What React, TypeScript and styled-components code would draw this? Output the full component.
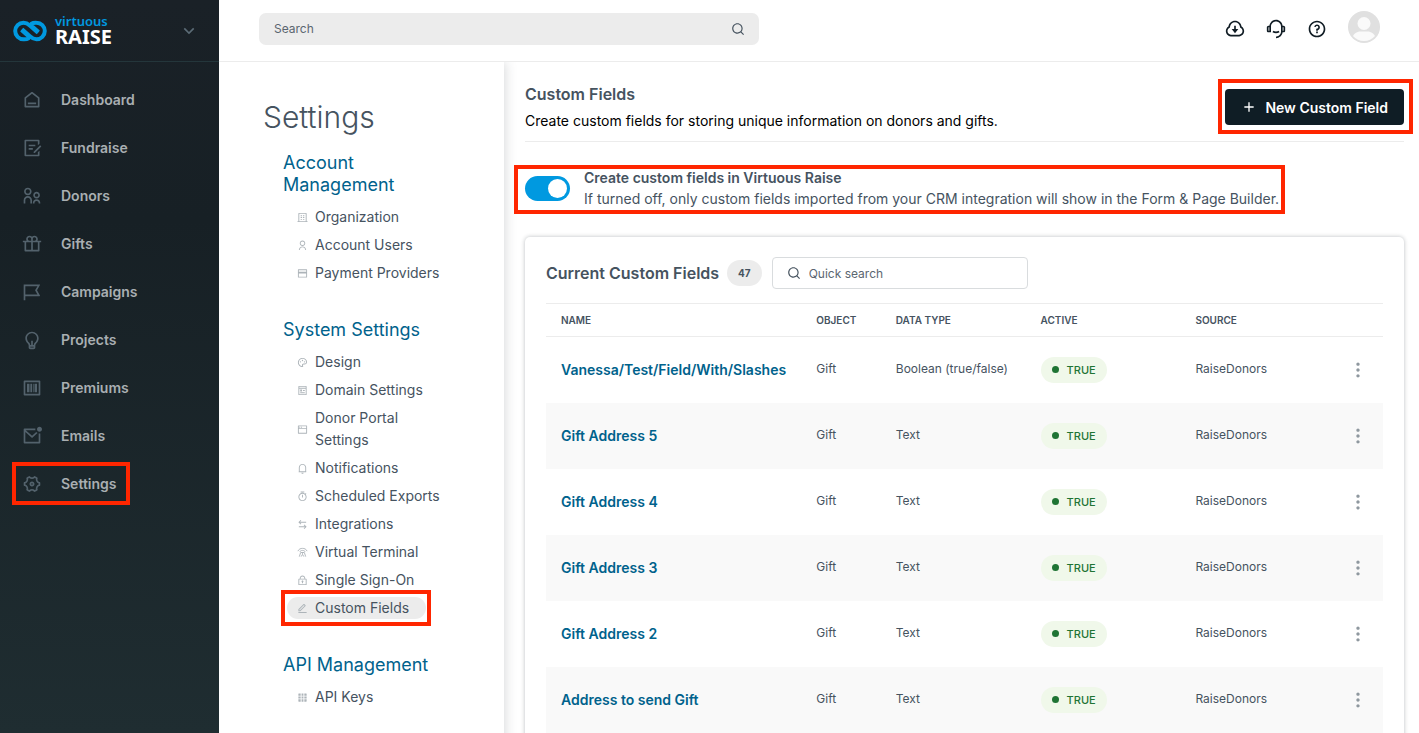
import React from "react";
import styled, { createGlobalStyle, css } from "styled-components";
import type { IconType } from "react-icons";
import {
  RiAddLine,
  RiArrowDownSLine,
  RiArrowLeftRightLine,
  RiBankCard2Line,
  RiBarcodeBoxLine,
  RiBuilding4Line,
  RiCustomerService2Line,
  RiDownloadCloudLine,
  RiDraftLine,
  RiEditLine,
  RiFlag2Line,
  RiGiftLine,
  RiGridFill,
  RiHome6Line,
  RiLightbulbLine,
  RiLock2Line,
  RiMailUnreadLine,
  RiMore2Fill,
  RiNotification4Line,
  RiPagesLine,
  RiPaletteLine,
  RiParentLine,
  RiQuestionLine,
  RiSearchLine,
  RiSettings4Line,
  RiTimerLine,
  RiUserLine,
  RiWindowLine,
} from "react-icons/ri";

const ink = "#46535f";
const link = "#00628c";
const line = "#ececec";
const alert = "#ff2600";

const GlobalStyle = createGlobalStyle`
  *, *::before, *::after { box-sizing: border-box; }
  body {
    margin: 0;
    font-family: Inter, "Liberation Sans", sans-serif;
    font-size: 14px;
    color: ${ink};
    background: #fff;
  }
  h1, h2, h3, p, ul { margin: 0; padding: 0; }
  ul { list-style: none; }
  a { color: inherit; text-decoration: none; }
  strong { font-weight: 600; }
  button, input { font: inherit; color: inherit; }
`;

const Shell = styled.div`
  display: grid;
  grid-template-columns: 219px 1fr;
  height: 100vh;
  overflow: hidden;
`;

/* Red call-out frame drawn over a control; --reach sets how far it extends. */
const callout = css`
  position: relative;
  &::after {
    content: "";
    position: absolute;
    inset: var(--reach);
    border: 4px solid ${alert};
    pointer-events: none;
  }
`;

const Sidebar = styled.aside`
  background: linear-gradient(#1a2127, #172025 30%, #1f2d31);
  color: #a9afb2;
`;

const Brand = styled.div`
  display: flex;
  align-items: center;
  height: 62px;
  padding: 0 20px 0 13px;
  border-bottom: 1px solid #24363b;
`;

const BrandName = styled.div`
  margin-left: 8px;
  flex: 1;
  font-family: "Noto Sans", sans-serif;
`;

const BrandCompany = styled.div`
  font-size: 13px;
  line-height: 13px;
  font-weight: 600;
  color: #0099e0;
`;

const BrandProduct = styled.div`
  font-size: 20px;
  line-height: 18px;
  font-weight: 700;
  color: #fff;
`;

const BrandToggle = styled.button`
  display: flex;
  padding: 0;
  border: 0;
  background: none;
  color: #5b6b76;
  font-size: 20px;
`;

const MainNav = styled.ul`
  padding-top: 14px;
`;

const MainLink = styled.a`
  display: inline-flex;
  align-items: center;
  gap: 19px;
  height: 48px;
  padding-left: 22px;
  font-weight: 600;
  line-height: 20px;
  svg { width: 20px; height: 20px; color: #53626c; }
  &[aria-current] {
    ${callout}
    --reach: 2px -13px 3px 12px;
  }
`;

const Body = styled.div`
  display: grid;
  grid-template-rows: 62px 1fr;
  min-width: 0;
  min-height: 0;
`;

const TopBar = styled.header`
  display: flex;
  align-items: center;
  justify-content: space-between;
  padding: 0 39px 4px 40px;
  border-bottom: 1px solid ${line};
`;

const SearchBox = styled.label`
  display: flex;
  align-items: center;
  width: 500px;
  height: 32px;
  padding: 0 14px 0 15px;
  border-radius: 7px;
  background: #ececec;
  font-size: 12px;
  svg { width: 14px; height: 14px; }
`;

const PlainInput = styled.input`
  flex: 1;
  min-width: 0;
  padding: 0;
  border: 0;
  outline: 0;
  background: none;
  &::placeholder { color: #5b6670; opacity: 1; }
`;

const Tools = styled.div`
  display: flex;
  align-items: center;
  gap: 21px;
  color: #101c24;
`;

const ToolButton = styled.button`
  display: flex;
  padding: 0;
  border: 0;
  background: none;
  font-size: 20px;
`;

const AccountButton = styled(ToolButton)`
  padding-bottom: 4px;
`;

const Columns = styled.div`
  display: grid;
  grid-template-columns: 285px 1fr;
  min-height: 0;
`;

const SettingsNav = styled.nav`
  padding: 35px 64px 0 44px;
  box-shadow: 0 0 12px rgba(40, 50, 60, 0.22);
  clip-path: inset(0 -24px 0 0);
`;

const NavTitle = styled.h1`
  font-size: 30px;
  line-height: 40px;
  font-weight: 300;
`;

const NavGroup = styled.section`
  padding-left: 20px;
  & + & { margin-top: 35px; }
  h1 + & { margin-top: 15px; }
`;

const NavHeading = styled.h2`
  margin-bottom: 10px;
  font-size: 18px;
  line-height: 22px;
  font-weight: 400;
  color: ${link};
`;

const NavList = styled.ul`
  display: flex;
  flex-direction: column;
  align-items: flex-start;
  gap: 6px;
  padding-left: 4px;
`;

const NavLink = styled.a<{ $wraps?: boolean }>`
  display: flex;
  align-items: center;
  gap: 7px;
  width: ${(p) => (p.$wraps ? "146px" : "auto")};
  padding: 0 17px 0 10px;
  border-radius: 11px;
  line-height: 22px;
  white-space: ${(p) => (p.$wraps ? "normal" : "nowrap")};
  svg { flex: none; width: 11px; height: 11px; color: #adb4b9; }
  &[aria-current] {
    background: #ececec;
    ${callout}
    --reach: -7px -5px -7px -6px;
  }
`;

const Content = styled.main`
  min-width: 0;
  padding: 19px 15px 0 21px;
`;

const PageHead = styled.div`
  display: flex;
  justify-content: space-between;
  align-items: flex-start;
  height: 61px;
  border-bottom: 1px solid ${line};
`;

const PageTitle = styled.h2`
  font-size: 16px;
  line-height: 26px;
  font-weight: 600;
`;

const Lead = styled.p`
  line-height: 28px;
  color: #000;
`;

const PrimaryButton = styled.button`
  display: flex;
  align-items: center;
  gap: 8px;
  height: 36px;
  margin-top: 8px;
  padding: 0 16px;
  border: 0;
  border-radius: 4px;
  background: #0f1d25;
  color: #fff;
  font-weight: 600;
  svg { width: 16px; height: 16px; }
  ${callout}
  --reach: -10px -9px -9px -7px;
`;

const SwitchRow = styled.label`
  display: flex;
  align-items: center;
  gap: 14px;
  width: fit-content;
  margin-top: 25px;
  line-height: 21px;
  ${callout}
  --reach: -2px -6px -5px -11px;
`;

const Switch = styled.input`
  appearance: none;
  display: flex;
  align-items: center;
  justify-content: flex-end;
  width: 45px;
  height: 25px;
  margin: 0;
  padding: 3px;
  border-radius: 13px;
  background: #0099e0;
  &::before {
    content: "";
    width: 19px;
    height: 19px;
    border-radius: 50%;
    background: #fff;
  }
  &:not(:checked) { justify-content: flex-start; background: #aab2b8; }
`;

const Card = styled.section`
  margin-top: 28px;
  min-height: 600px;
  padding: 20px 21px;
  border-radius: 5px;
  box-shadow: 0 0 4px rgba(30, 40, 50, 0.3);
`;

const CardHead = styled.div`
  display: flex;
  align-items: center;
  height: 32px;
  margin-bottom: 14px;
`;

const CardTitle = styled.h3`
  font-size: 16px;
  font-weight: 600;
`;

const Count = styled.span`
  margin: 0 10px 0 8px;
  padding: 0 11px;
  border-radius: 13px;
  background: #ececec;
  font-size: 10px;
  line-height: 26px;
  font-weight: 700;
`;

const QuickSearch = styled.label`
  display: flex;
  align-items: center;
  gap: 8px;
  width: 256px;
  height: 32px;
  padding: 0 14px;
  border: 1px solid #d9dcde;
  border-radius: 4px;
  font-size: 12px;
  svg { width: 14px; height: 14px; }
`;

const Table = styled.table`
  width: 100%;
  table-layout: fixed;
  border-collapse: collapse;
  font-size: 12px;
`;

const Th = styled.th<{ $w?: string }>`
  width: ${(p) => p.$w ?? "auto"};
  height: 33px;
  padding: 0 0 0 15px;
  border: solid ${line};
  border-width: 1px 0;
  text-align: left;
  font-size: 10px;
  font-weight: 600;
`;

const Row = styled.tr`
  &:nth-child(even) { background: #f9f9f9; }
`;

const Td = styled.td<{ $control?: boolean }>`
  height: 66px;
  padding: 0 0 ${(p) => (p.$control ? "0" : "2px")} 15px;
  white-space: nowrap;
`;

const FieldLink = styled.a`
  font-size: 14px;
  font-weight: 600;
  color: ${link};
`;

const Status = styled.span`
  display: flex;
  align-items: center;
  gap: 8px;
  width: fit-content;
  height: 26px;
  padding: 0 11px;
  border-radius: 13px;
  background: #f0f8ea;
  color: #1f7434;
  font-size: 11px;
  font-weight: 500;
  &::before {
    content: "";
    width: 7px;
    height: 7px;
    border-radius: 50%;
    background: currentColor;
  }
`;

const RowMenu = styled.button`
  display: flex;
  margin-left: auto;
  padding: 0 15px 0 0;
  border: 0;
  background: none;
  color: #8f989f;
  font-size: 20px;
`;

const TerminalIcon = () => (
  <svg viewBox="0 0 24 24" fill="none" stroke="currentColor" strokeWidth="2" aria-hidden>
    <path d="M2 9C4 4.500 8 3 12 3S20 4.500 22 9M6 11C7 8.500 9 7.500 12 7.500S17 8.500 18 11M5 21L8 12H16L19 21M12 12V15M9 21L12 16L15 21" />
  </svg>
);

const LogoMark = () => (
  <svg width="34" height="22" viewBox="0 0 34 22" fill="none" stroke="#0099e0" strokeWidth="4" aria-hidden>
    <path d="M8.500 10L15 15.700C17.500 17.800 15 19.500 10.500 19.300A8.300 8.300 0 0 1 10.500 2.700C13.500 2.700 15 3.800 16.800 5.400L25 12.700" />
    <path d="M25.500 12L19 6.300C16.500 4.200 19 2.500 23.500 2.700A8.300 8.300 0 0 1 23.500 19.300C20.500 19.300 19 18.200 17.200 16.600L9 9.300" />
  </svg>
);

const Avatar = () => (
  <svg width="32" height="32" viewBox="0 0 32 32" aria-hidden>
    <circle cx="16" cy="16" r="16" fill="#e0e0e0" />
    <circle cx="16" cy="12.500" r="6.500" fill="#fafafa" />
    <path d="M5 25C8 20 12 20.500 16 20.500S24 20 27 25A14.500 14.500 0 0 1 5 25Z" fill="#fafafa" />
  </svg>
);

const mainLinks: [string, IconType][] = [
  ["Dashboard", RiHome6Line],
  ["Fundraise", RiDraftLine],
  ["Donors", RiParentLine],
  ["Gifts", RiGiftLine],
  ["Campaigns", RiFlag2Line],
  ["Projects", RiLightbulbLine],
  ["Premiums", RiBarcodeBoxLine],
  ["Emails", RiMailUnreadLine],
  ["Settings", RiSettings4Line],
];

const settingsGroups: { title: string; links: [string, IconType | typeof TerminalIcon][] }[] = [
  {
    title: "Account Management",
    links: [
      ["Organization", RiBuilding4Line],
      ["Account Users", RiUserLine],
      ["Payment Providers", RiBankCard2Line],
    ],
  },
  {
    title: "System Settings",
    links: [
      ["Design", RiPaletteLine],
      ["Domain Settings", RiPagesLine],
      ["Donor Portal Settings", RiWindowLine],
      ["Notifications", RiNotification4Line],
      ["Scheduled Exports", RiTimerLine],
      ["Integrations", RiArrowLeftRightLine],
      ["Virtual Terminal", TerminalIcon],
      ["Single Sign-On", RiLock2Line],
      ["Custom Fields", RiEditLine],
    ],
  },
  { title: "API Management", links: [["API Keys", RiGridFill]] },
];

const fields = [
  { name: "Vanessa/Test/Field/With/Slashes", type: "Boolean (true/false)" },
  { name: "Gift Address 5", type: "Text" },
  { name: "Gift Address 4", type: "Text" },
  { name: "Gift Address 3", type: "Text" },
  { name: "Gift Address 2", type: "Text" },
  { name: "Address to send Gift", type: "Text" },
];

export default function App() {
  return (
    <Shell>
      <GlobalStyle />
      <Sidebar>
        <Brand>
          <LogoMark />
          <BrandName>
            <BrandCompany>virtuous</BrandCompany>
            <BrandProduct>RAISE</BrandProduct>
          </BrandName>
          <BrandToggle aria-label="Switch product">
            <RiArrowDownSLine />
          </BrandToggle>
        </Brand>
        <nav aria-label="Main">
          <MainNav>
            {mainLinks.map(([label, Icon]) => (
              <li key={label}>
                <MainLink href="#" aria-current={label === "Settings" ? "page" : undefined}>
                  <Icon />
                  {label}
                </MainLink>
              </li>
            ))}
          </MainNav>
        </nav>
      </Sidebar>
      <Body>
        <TopBar>
          <SearchBox>
            <PlainInput type="search" placeholder="Search" aria-label="Search" />
            <RiSearchLine />
          </SearchBox>
          <Tools>
            <ToolButton aria-label="Downloads"><RiDownloadCloudLine /></ToolButton>
            <ToolButton aria-label="Support"><RiCustomerService2Line /></ToolButton>
            <ToolButton aria-label="Help"><RiQuestionLine /></ToolButton>
            <AccountButton aria-label="Account"><Avatar /></AccountButton>
          </Tools>
        </TopBar>
        <Columns>
          <SettingsNav aria-label="Settings">
            <NavTitle>Settings</NavTitle>
            {settingsGroups.map((group) => (
              <NavGroup key={group.title}>
                <NavHeading>{group.title}</NavHeading>
                <NavList>
                  {group.links.map(([label, Icon]) => (
                    <li key={label}>
                      <NavLink
                        href="#"
                        $wraps={label.length > 20}
                        aria-current={label === "Custom Fields" ? "page" : undefined}
                      >
                        <Icon />
                        {label}
                      </NavLink>
                    </li>
                  ))}
                </NavList>
              </NavGroup>
            ))}
          </SettingsNav>
          <Content>
            <PageHead>
              <div>
                <PageTitle>Custom Fields</PageTitle>
                <Lead>Create custom fields for storing unique information on donors and gifts.</Lead>
              </div>
              <PrimaryButton>
                <RiAddLine />
                New Custom Field
              </PrimaryButton>
            </PageHead>
            <SwitchRow>
              <Switch type="checkbox" role="switch" defaultChecked />
              <span>
                <strong>Create custom fields in Virtuous Raise</strong>
                <br />
                If turned off, only custom fields imported from your CRM integration will show in the Form &amp; Page Builder.
              </span>
            </SwitchRow>
            <Card>
              <CardHead>
                <CardTitle>Current Custom Fields</CardTitle>
                <Count>47</Count>
                <QuickSearch>
                  <RiSearchLine />
                  <PlainInput type="search" placeholder="Quick search" aria-label="Quick search" />
                </QuickSearch>
              </CardHead>
              <Table>
                <thead>
                  <tr>
                    <Th $w="30.5%">NAME</Th>
                    <Th $w="9.5%">OBJECT</Th>
                    <Th $w="17.3%">DATA TYPE</Th>
                    <Th $w="18.5%">ACTIVE</Th>
                    <Th>SOURCE</Th>
                    <Th $w="60px" aria-label="Actions" />
                  </tr>
                </thead>
                <tbody>
                  {fields.map((field) => (
                    <Row key={field.name}>
                      <Td $control><FieldLink href="#">{field.name}</FieldLink></Td>
                      <Td>Gift</Td>
                      <Td>{field.type}</Td>
                      <Td $control><Status>TRUE</Status></Td>
                      <Td>RaiseDonors</Td>
                      <Td $control>
                        <RowMenu aria-label={`Actions for ${field.name}`}><RiMore2Fill /></RowMenu>
                      </Td>
                    </Row>
                  ))}
                </tbody>
              </Table>
            </Card>
          </Content>
        </Columns>
      </Body>
    </Shell>
  );
}
